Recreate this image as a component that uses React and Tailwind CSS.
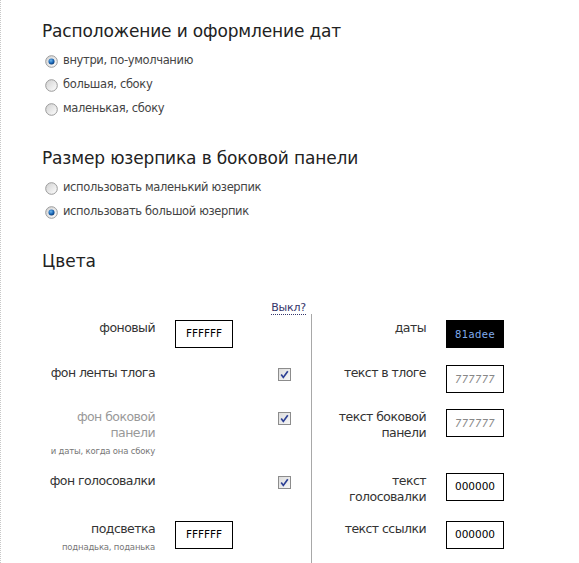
import React from 'react';

const font = { fontFamily: '"DejaVu Sans", Verdana, sans-serif' };

// Old-style radio button, drawn by hand
const Radio = ({ checked }) => (
  <svg width="13" height="13" viewBox="0 0 13 13" className="shrink-0">
    <defs>
      <linearGradient id="rbg" x1="0" y1="0" x2="1" y2="1">
        <stop offset="0" stopColor="#d0d0d0" />
        <stop offset="1" stopColor="#ffffff" />
      </linearGradient>
      <radialGradient id="rdot" cx="0.4" cy="0.35" r="0.7">
        <stop offset="0" stopColor="#6fb8ee" />
        <stop offset="0.6" stopColor="#1864b4" />
        <stop offset="1" stopColor="#0b3468" />
      </radialGradient>
    </defs>
    <circle cx="6.5" cy="6.5" r="5.8" fill="url(#rbg)" stroke="#9a9a9a" strokeWidth="1" />
    {checked && <circle cx="6.5" cy="6.5" r="3" fill="url(#rdot)" />}
  </svg>
);

const Checkbox = () => (
  <svg width="13" height="13" viewBox="0 0 13 13" className="shrink-0">
    <defs>
      <linearGradient id="cbg" x1="0" y1="0" x2="1" y2="1">
        <stop offset="0" stopColor="#dcdcdc" />
        <stop offset="1" stopColor="#f7f7f7" />
      </linearGradient>
    </defs>
    <rect x="0.5" y="0.5" width="12" height="12" fill="url(#cbg)" stroke="#8c8c8c" />
    <path d="M3.2 6.6 L5.3 9.4 L9.8 3.2" fill="none" stroke="#2c3f94" strokeWidth="1.7" />
  </svg>
);

const ColorBox = ({ value, dark, muted }) => {
  let look = 'bg-white border-black text-black text-[10.5px]';
  if (dark) look = 'bg-black border-black text-[#81adee] text-[10px] tracking-[0.4px]';
  if (muted) look = 'bg-white border-black text-[#888] italic text-[10px] tracking-[0.3px]';
  return (
    <div className={`ml-[20px] w-[58px] h-[28px] shrink-0 flex items-center justify-center border ${look}`}>
      {value}
    </div>
  );
};

const radioRow = (label, checked) => (
  <div className="flex items-center h-[24px] pl-[3px] gap-[5px] text-[11.5px] tracking-[-0.35px] text-[#444]">
    <Radio checked={checked} />
    <span>{label}</span>
  </div>
);

const leftRows = [
  { label: 'фоновый', box: 'FFFFFF', h: 'h-[45px]' },
  { label: 'фон ленты тлога', check: true, h: 'h-[44px]' },
  { label: 'фон боковой панели', sub: 'и даты, когда она сбоку', grey: true, check: true, h: 'h-[64px]' },
  { label: 'фон голосовалки', check: true, h: 'h-[48px]' },
  { label: 'подсветка', sub: 'поднадька, поданька', box: 'FFFFFF', h: 'h-[60px]' },
];

const rightRows = [
  { label: 'даты', box: '81adee', dark: true, h: 'h-[45px]' },
  { label: 'текст в тлоге', box: '777777', muted: true, h: 'h-[44px]' },
  { label: 'текст боковой панели', box: '777777', muted: true, h: 'h-[64px]' },
  { label: 'текст голосовалки', box: '000000', h: 'h-[48px]' },
  { label: 'текст ссылки', box: '000000', h: 'h-[60px]' },
];

export default function App() {
  return (
    <div style={font} className="min-h-[563px] bg-white border-l border-dotted border-[#c8c8c8] pl-[41px] pt-[20px] overflow-hidden">
      <h1 className="text-[17px] leading-[22px] tracking-[-0.15px] text-[#222]">Расположение и оформление дат</h1>
      <div className="mt-[7px]">
        {radioRow('внутри, по-умолчанию', true)}
        {radioRow('большая, сбоку', false)}
        {radioRow('маленькая, сбоку', false)}
      </div>

      <h2 className="mt-[26px] text-[17px] leading-[22px] tracking-[-0.15px] text-[#222]">Размер юзерпика в боковой панели</h2>
      <div className="mt-[7px]">
        {radioRow('использовать маленький юзерпик', false)}
        {radioRow('использовать большой юзерпик', true)}
      </div>

      <h2 className="mt-[26px] text-[17px] leading-[22px] text-[#222]">Цвета</h2>

      <div className="mt-[27px] w-[264px] text-right leading-[13px]">
        <span className="text-[11px] tracking-[-0.2px] text-[#35356a] border-b border-dotted border-[#35356a]">Выкл?</span>
      </div>

      <div className="flex">
        <div className="w-[270px] border-r border-[#a8a8a8] pt-[6px]">
          {leftRows.map((r) => (
            <div key={r.label} className={`flex items-start ${r.h}`}>
              <div className="w-[113px] shrink-0 text-right">
                <div className={`text-[12.5px] leading-[16px] tracking-[-0.55px] ${r.grey ? 'text-[#999]' : 'text-[#333]'}`}>{r.label}</div>
                {r.sub && <div className="mt-[5px] text-[8.5px] leading-[11px] tracking-[-0.2px] text-[#777]">{r.sub}</div>}
              </div>
              {r.box ? <ColorBox value={r.box} /> : <div className="ml-[20px] w-[58px] shrink-0" />}
              {r.check && (
                <div className="ml-[45px] pt-[3px]">
                  <Checkbox />
                </div>
              )}
            </div>
          ))}
        </div>
        <div className="pt-[6px]">
          {rightRows.map((r) => (
            <div key={r.label} className={`flex items-start ${r.h}`}>
              <div className="w-[114px] pl-[6px] shrink-0 text-right text-[12.5px] leading-[16px] tracking-[-0.55px] text-[#333]">{r.label}</div>
              <ColorBox value={r.box} dark={r.dark} muted={r.muted} />
            </div>
          ))}
        </div>
      </div>
    </div>
  );
}
